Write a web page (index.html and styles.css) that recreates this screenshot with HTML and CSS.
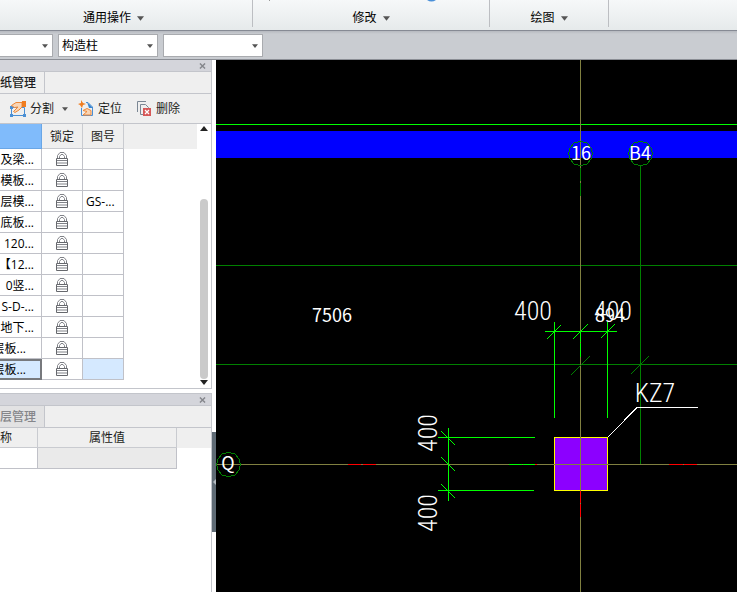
FILE: index.html
```
<!DOCTYPE html>
<html lang="zh-CN">
<head>
<meta charset="utf-8">
<title>图纸管理</title>
<link rel="stylesheet" href="styles.css">
</head>
<body>
<svg class="defs" aria-hidden="true">
  <symbol id="lock" viewBox="0 0 12 14"><path d="M1.500 7V3.500L4 .5H8L10.500 3.500V7M3.500 7V4.500L5 2.500H7L8.500 4.500V7" fill="none" stroke="#808288"/><path d="M.5 6.500H11.500V13.500H.5Z" fill="#fff" stroke="#66686d"/><path d="M1 8.500H11M1 11H11" stroke="#808288"/></symbol>
  <symbol id="caret" viewBox="0 0 8 5"><path d="M0 0H8L4 5Z" fill="currentColor"/></symbol>
  <symbol id="close" viewBox="0 0 8 7"><path d="M1 .5L7 6.500M7 .5L1 6.500" stroke="#85878c" stroke-width="1.600"/></symbol>
</svg>
<div class="app">
  <header class="ribbon">
    <div class="group group-general"><button>通用操作<svg><use href="#caret"/></svg></button></div>
    <div class="group group-modify"><svg class="peek" viewBox="0 0 236 2"><path d="M16 0h1v1h-1z" fill="#999"/><path d="M174 0h9q-4.500 3-9 0z" fill="#4a90d9"/></svg><button>修改<svg><use href="#caret"/></svg></button></div>
    <div class="group group-draw"><button>绘图<svg><use href="#caret"/></svg></button></div>
  </header>
  <div class="selectors">
    <label class="combo combo-first"><select aria-label="楼层"><option></option></select><svg><use href="#caret"/></svg></label>
    <label class="combo"><select aria-label="构件类型"><option>构造柱</option></select><svg><use href="#caret"/></svg></label>
    <label class="combo"><select aria-label="构件"><option></option></select><svg><use href="#caret"/></svg></label>
  </div>
  <div class="workspace">
    <aside class="sidebar">
      <section class="panel">
        <div class="titlebar"><button aria-label="关闭"><svg><use href="#close"/></svg></button></div>
        <div class="tabs"><button class="tab">纸管理</button></div>
        <div class="tools">
          <button class="tool tool-split"><svg viewBox="0 0 18 18"><path d="M1.500 7.500H14.500V15.500H1.500Z" fill="none" stroke="#4a8fd4"/><path d="M0 6h3v3H0zM0 14h3v3H0zM13 14h3v3h-3z" fill="#4a8fd4"/><path d="M1.500 5.500L6 2.500H12V7L9 10L5 12.500L3.500 11.500L8 7L4.500 7.500Z" fill="#f8d5b6" stroke="#ee8838"/><path d="M12 1h4v6h-4z" fill="#f07d20"/></svg>分割<svg class="mini"><use href="#caret"/></svg></button>
          <button class="tool tool-locate"><svg viewBox="0 0 18 18"><path d="M3.500 8V15.500H14.500V7L10 2.500H8" fill="none" stroke="#4a8fd4"/><path d="M9 2L15 8H11Z" fill="#3b86cf"/><path d="M3 0L5 3L8 4L5 5L4 8L2 5L0 4L3 3Z" fill="#f07d20"/><path d="M5 10.500L9 8.500L13 10.500V15H5L9 11.500Z" fill="#f8d5b6" stroke="#ee8838"/></svg>定位</button>
          <button class="tool"><svg viewBox="0 0 18 18"><path d="M1.500 12V1.500H10M4.500 14.500V4.500H9.500L12.500 7.500V14.500Z" fill="none" stroke="#7b8794"/><path d="M7 8h8v8H7z" fill="#d65858"/><path d="M9 10L13 14M13 10L9 14" stroke="#fff" stroke-width="1.300"/></svg>删除</button>
        </div>
        <div class="listing">
          <div class="scrolled">
            <table class="drawings">
              <colgroup><col class="c-name"><col class="c-lock"><col class="c-no"></colgroup>
              <thead><tr><th class="picked"></th><th>锁定</th><th>图号</th></tr></thead>
              <tbody>
                <tr><td>及梁...</td><td><svg><use href="#lock"/></svg></td><td></td></tr>
                <tr><td>模板...</td><td><svg><use href="#lock"/></svg></td><td></td></tr>
                <tr><td>层模...</td><td><svg><use href="#lock"/></svg></td><td>GS-...</td></tr>
                <tr><td>底板...</td><td><svg><use href="#lock"/></svg></td><td></td></tr>
                <tr><td>120...</td><td><svg><use href="#lock"/></svg></td><td></td></tr>
                <tr><td>【12...</td><td><svg><use href="#lock"/></svg></td><td></td></tr>
                <tr><td>0竖...</td><td><svg><use href="#lock"/></svg></td><td></td></tr>
                <tr><td>S-D-...</td><td><svg><use href="#lock"/></svg></td><td></td></tr>
                <tr><td>地下...</td><td><svg><use href="#lock"/></svg></td><td></td></tr>
                <tr class="short"><td>层板...</td><td><svg><use href="#lock"/></svg></td><td></td></tr>
                <tr class="short current"><td>层板...</td><td><svg><use href="#lock"/></svg></td><td></td></tr>
              </tbody>
            </table>
          </div>
          <div class="scrollbar"><svg class="up"><use href="#caret"/></svg><div class="thumb"></div><svg><use href="#caret"/></svg></div>
        </div>
      </section>
      <section class="panel panel-layers">
        <div class="titlebar"><button aria-label="关闭"><svg><use href="#close"/></svg></button></div>
        <div class="tabs"><button class="tab tab-idle">层管理</button></div>
        <div class="props-wrap">
          <table class="props">
            <colgroup><col class="c-key"><col class="c-value"></colgroup>
            <thead><tr><th>称</th><th>属性值</th></tr></thead>
            <tbody><tr><td></td><td class="readonly"></td></tr></tbody>
          </table>
        </div>
      </section>
    </aside>
    <div class="splitter"><button aria-label="折叠"><svg viewBox="0 0 3 6"><path d="M3 0V6L0 3Z" fill="#b5bcc2"/></svg></button></div>
    <main class="drawing">
      <svg class="cad">
        <g transform="translate(-216 -60)" fill="none" shape-rendering="crispEdges">
          <path d="M216 131H3000V158H216Z" fill="#00f"/>
          <path d="M216 265.500H3000M216 364.500H3000M640.500 166V464" stroke="#008000"/>
          <path d="M216 124.500H3000" stroke="#0f0"/>
          <path d="M554.500 437.500H607.500V490.500H554.500Z" fill="#8c00ff" stroke="#ff0"/>
          <path d="M580.500 60V3000M216 464.500H3000" stroke="#808040"/>
          <path d="M580.500 168V181M580.500 183V196" stroke="#008000"/>
          <path d="M571 375L590 356M631 374L649 356" stroke="#008000"/>
          <g stroke="#008000"><path id="bubble" d="M580.500 141.500L587 143L591 148L592.500 153.500L591 159L587 164L580.500 165.500L574 164L570 159L568.500 153.500L570 148L574 143Z"/><use href="#bubble" x="60"/><use href="#bubble" x="-352" y="311"/></g>
          <path d="M545 331.500H617M554.500 322V418M607.500 322V418M580.500 331V342M580.500 343V357M547 339L561 325M573 339L588 324M601 338L615 324" stroke="#0f0"/>
          <path d="M448.500 428V501M438 437.500H535M438 490.500H534M441 431L455 445M441 457L455 471M441 484L455 498M509 464.500H522M523 464.500H535" stroke="#0f0"/>
          <path d="M348 464.500H361M363 464.500H376M535 464.500H537M669 464.500H683M684 464.500H697M580.500 491V503M580.500 504V517" stroke="#f00"/>
          <path d="M608 437L637 407.500H698" stroke="#fff"/>
        </g>
        <g class="labels" transform="translate(-216 -60)">
          <text x="581" y="160" text-anchor="middle">16</text>
          <text x="640" y="160" text-anchor="middle">B4</text>
          <text x="228" y="470" text-anchor="middle">Q</text>
          <text x="312" y="322">7506</text>
          <text x="595" y="322">894</text>
          <g class="tall">
            <text x="533" y="320" text-anchor="middle">400</text>
            <text x="613" y="320" text-anchor="middle">400</text>
            <text x="655" y="402" text-anchor="middle">KZ7</text>
            <text transform="translate(437 433) rotate(-90)" text-anchor="middle">400</text>
            <text transform="translate(437 513) rotate(-90)" text-anchor="middle">400</text>
          </g>
        </g>
      </svg>
    </main>
  </div>
</div>
</body>
</html>
```
FILE: styles.css
```
* { box-sizing: border-box; }
body { margin: 0; overflow: hidden; color: #1c1d20; font: 12px/16px "Open Sans", "Noto Sans CJK SC", sans-serif; }
button, select { padding: 0; border: 0; background: none; color: inherit; font: inherit; }
.defs { position: absolute; width: 0; height: 0; }
.app { display: flex; flex-direction: column; min-height: 100vh; }

.ribbon { display: flex; padding-bottom: 3px; border-bottom: 1px solid #868a94; background: linear-gradient(#f6f8f9, #e6eaeb); }
.group { position: relative; display: flex; justify-content: center; height: 27px; padding-top: 10px; border-right: 1px solid #bcbec2; }
.group-general { width: 278px; margin-left: -25px; }
.group-modify { width: 237px; }
.group-draw { width: 119px; }
.group button { display: flex; align-items: center; gap: 6px; height: 16px; color: #000; }
.group button svg { width: 7px; height: 5px; color: #555; }
.group .peek { position: absolute; top: 0; left: 0; width: 236px; height: 2px; }

.selectors { display: flex; gap: 5px; padding: 3px 0 2px; border-bottom: 1px solid #8b8e95; background: linear-gradient(#b6b9bf, #c9ccd1 3px); }
.combo { position: relative; width: 100px; height: 23px; border: 1px solid #a9abaf; background: #fff; }
.combo-first { margin-left: -47px; }
.combo select { display: block; width: 100%; height: 21px; padding-left: 3px; appearance: none; color: #000; }
.combo svg { position: absolute; top: 9px; right: 4px; width: 6px; height: 4px; color: #555; pointer-events: none; }

.workspace { display: flex; flex: 1; }
.sidebar { display: flex; flex-direction: column; gap: 4px; width: 212px; overflow: hidden; }
.panel { border: solid #c3c5cb; border-width: 0 1px 1px 0; }
.panel-layers { flex: 1; border-top-width: 1px; border-bottom-width: 0; }
.titlebar { display: flex; justify-content: flex-end; align-items: center; height: 12px; padding-right: 5px; border-bottom: 1px solid #c3c5cb; background: #d4d5db; }
.titlebar button, .titlebar svg { display: block; width: 7px; height: 6px; }
.tabs { display: flex; height: 22px; border-bottom: 1px solid #c3c5cb; background: #efefef; }
.tab { padding-right: 8px; border-right: 1px solid #c3c5cb; font-weight: 500; }
.tab-idle { background: #e2e2e3; color: #85868a; }
.tools { display: flex; align-items: center; height: 30px; padding-left: 10px; border-bottom: 1px solid #c3c5cb; background: #efefef; }
.tool { display: flex; align-items: center; gap: 2px; }
.tool svg { width: 18px; height: 18px; }
.tool .mini { width: 6px; height: 4px; margin-left: 6px; color: #555; }
.tool-split { margin-right: 10px; }
.tool-locate { margin-right: 14px; }

.listing { display: flex; height: 264px; }
.scrolled { flex: 1; background: linear-gradient(#efefef 25px, #fff 25px); }
table { border-collapse: separate; border-spacing: 0; table-layout: fixed; }
th { padding: 1px 0 0; border: solid #c9cbd0; border-width: 0 1px 1px 0; background: #efefef; font-weight: 400; }
td { height: 21px; padding: 1px 0 0; border: solid #c0c1c8; border-width: 0 1px 1px 0; background: #fff; color: #000; white-space: nowrap; }
.drawings { width: 164px; margin-left: -40px; }
.c-name { width: 82px; }
.c-lock, .c-no { width: 41px; }
.drawings th { height: 25px; }
.drawings th.picked { border-color: #69a6e6; background: #80bbfb; }
.drawings td:first-child { padding-right: 7px; text-align: right; }
.drawings td:nth-child(2) { padding-top: 0; text-align: center; }
.drawings td:nth-child(3) { padding-left: 3px; }
.drawings td svg { display: block; width: 12px; height: 14px; margin: auto; }
.drawings .short td:first-child { padding-right: 15px; }
.drawings .current td:nth-child(3) { background: #d5e9ff; }
.drawings .current td:first-child { padding-right: 14px; border: 2px solid #77797d; background: #d5e9ff; }
.scrollbar { display: flex; flex-direction: column; align-items: center; justify-content: space-between; width: 14px; padding: 2px 0 3px; color: #222; }
.scrollbar svg { width: 8px; height: 5px; }
.scrollbar .up { transform: rotate(180deg); }
.thumb { width: 8px; height: 180px; margin-top: auto; margin-bottom: 1px; border-radius: 4px; background: #cacaca; }

.props-wrap { background: linear-gradient(#efefef 20px, #fff 20px); }
.props { width: 177px; }
.c-key { width: 38px; }
.props th { height: 20px; padding: 0; line-height: 19px; }
.props th:first-child { text-align: left; }
.props .readonly { background: #eaeaea; }

.splitter { width: 4px; padding-top: 372px; background: #fff; }
.splitter button { display: flex; align-items: center; justify-content: flex-end; width: 4px; height: 100px; background: #5f6b75; }
.splitter svg { width: 3px; height: 6px; }

.drawing { position: relative; flex: 1; background: #000; }
.cad { position: absolute; width: 100%; height: 100%; }
.labels { fill: #fff; font-family: "Noto Sans CJK SC", sans-serif; font-size: 18px; }
.tall { font-family: "Liberation Sans Narrow", "Roboto Condensed", Roboto, sans-serif; font-size: 26px; font-weight: 300; }
```
